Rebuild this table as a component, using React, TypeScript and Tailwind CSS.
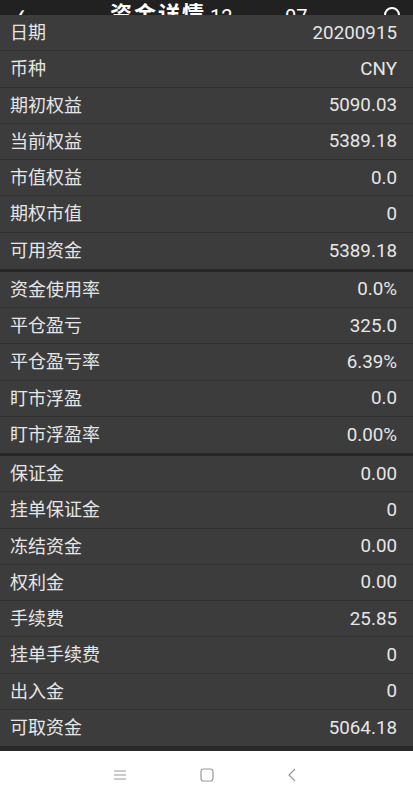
import React from "react";

const sections: [string, string][][] = [
  [
    ["日期", "20200915"],
    ["币种", "CNY"],
    ["期初权益", "5090.03"],
    ["当前权益", "5389.18"],
    ["市值权益", "0.0"],
    ["期权市值", "0"],
    ["可用资金", "5389.18"],
  ],
  [
    ["资金使用率", "0.0%"],
    ["平仓盈亏", "325.0"],
    ["平仓盈亏率", "6.39%"],
    ["盯市浮盈", "0.0"],
    ["盯市浮盈率", "0.00%"],
  ],
  [
    ["保证金", "0.00"],
    ["挂单保证金", "0"],
    ["冻结资金", "0.00"],
    ["权利金", "0.00"],
    ["手续费", "25.85"],
    ["挂单手续费", "0"],
    ["出入金", "0"],
    ["可取资金", "5064.18"],
  ],
];

export default function App() {
  return (
    <div
      className="w-[413px] h-[800px] flex flex-col bg-[#2a2a2a] overflow-hidden"
      style={{ fontFamily: 'Roboto, "Noto Sans CJK SC", sans-serif' }}
    >
      <div className="h-[15px] shrink-0 bg-[#212121] relative overflow-hidden text-white">
        <div className="absolute left-[18px] bottom-[-9px] text-[22px] leading-[22px] font-bold">‹</div>
        <div className="absolute left-[110px] bottom-[-11px] text-[22px] leading-[22px] font-bold tracking-[2px]">资金详情</div>
        <div className="absolute left-[210px] bottom-[-12px] text-[20px] leading-[20px]">12</div>
        <div className="absolute left-[285px] bottom-[-12px] text-[20px] leading-[20px]">07</div>
        <div className="absolute left-[384px] bottom-[-8px] w-[16px] h-[16px] rounded-full border-2 border-white"></div>
      </div>
      <div className="flex flex-col">
        {sections.map((sec, si) => (
          <div key={si} className={si > 0 ? "border-t-[3px] border-[#282828]" : ""}>
            {sec.map(([k, v], i) => (
              <div
                key={k}
                className={
                  "h-[36.25px] flex items-center justify-between bg-[#3c3c3c] pl-[10px] pr-[16px] text-[18px] text-[#e6e6e6] " +
                  (i < sec.length - 1 ? "border-b border-[#313131]" : "")
                }
              >
                <span>{k}</span>
                <span className="text-[18.8px]">{v}</span>
              </div>
            ))}
          </div>
        ))}
      </div>
      <div className="h-[5px] shrink-0 bg-[#2a2a2a]"></div>
      <div className="flex-1 bg-white flex items-center justify-center text-[#9a9a9a]">
        <div className="flex items-center gap-[73px] -mt-[2px]">
          <svg width="14" height="12" viewBox="0 0 14 12" className="ml-[-4px]">
            <path d="M1 2h12M1 6h12M1 10h12" stroke="#9a9a9a" strokeWidth="1.2" fill="none" />
          </svg>
          <svg width="14" height="14" viewBox="0 0 14 14">
            <rect x="1" y="1" width="12" height="12" rx="2.5" stroke="#9a9a9a" strokeWidth="1.2" fill="none" />
          </svg>
          <svg width="10" height="14" viewBox="0 0 10 14">
            <path d="M8 1L2 7l6 6" stroke="#9a9a9a" strokeWidth="1.2" fill="none" />
          </svg>
        </div>
      </div>
    </div>
  );
}
